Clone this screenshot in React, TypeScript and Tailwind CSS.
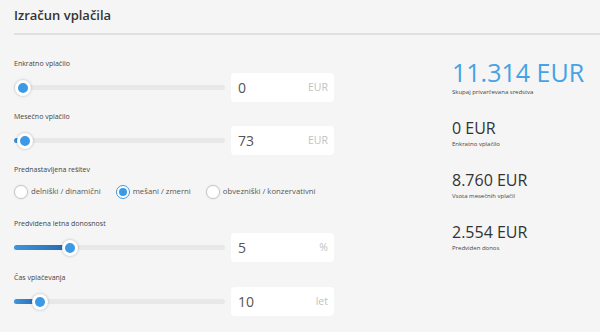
import { useState } from "react";

/* ---------------------------------- Types --------------------------------- */
type SliderRowProps = {
  label: string;
  value: number;
  unit: string;
  frac: number;
};

type Result = {
  value: string;
  label: string;
  accent?: boolean;
};

/* ---------------------------------- Data ---------------------------------- */
const TRACK_W = 211;
const THUMB = 16;

const presets = ["delniški / dinamični", "mešani / zmerni", "obvezniški / konzervativni"];

const results: Result[] = [
  { value: "11.314 EUR", label: "Skupaj privarčevana sredstva", accent: true },
  { value: "0 EUR", label: "Enkratno vplačilo" },
  { value: "8.760 EUR", label: "Vsota mesečnih vplačil" },
  { value: "2.554 EUR", label: "Predviden donos" },
];

/* ------------------------------- Components ------------------------------- */
function Slider({ frac }: { frac: number }) {
  const left = 1 + Math.round(frac * (TRACK_W - THUMB - 2));
  return (
    <div className="relative h-[16px] w-[211px]">
      <div className="absolute left-0 right-0 top-[5px] h-[5px] rounded-full bg-[#e8e8e8]" />
      {frac > 0 && (
        <div
          className="absolute left-0 top-[5px] h-[5px] rounded-full bg-gradient-to-r from-[#3f95de] to-[#2667ab]"
          style={{ width: left + THUMB / 2 }}
        />
      )}
      <div
        className="absolute top-0 h-[16px] w-[16px] rounded-full border-[3px] border-white bg-[#3b99e6] shadow-[0_0_3px_rgba(0,0,0,0.25)]"
        style={{ left }}
      />
    </div>
  );
}

function SliderRow({ label, value, unit, frac }: SliderRowProps) {
  return (
    <div className="flex flex-col">
      <div className="text-[7px] leading-[9px] text-[#444]">{label}</div>
      <div className="mt-[5px] flex items-center gap-[6px]">
        <Slider frac={frac} />
        <div className="flex h-[29px] w-[103px] items-center justify-between rounded-[4px] bg-white pl-[7px] pr-[6px]">
          <span className="text-[14px] text-[#555]">{value}</span>
          <span className="text-[10.5px] text-[#c2c2c2]">{unit}</span>
        </div>
      </div>
    </div>
  );
}

function Radio({ label, checked, onClick }: { label: string; checked: boolean; onClick: () => void }) {
  return (
    <button type="button" onClick={onClick} className="flex items-center gap-[3px]">
      <span
        className={
          checked
            ? "flex h-[14px] w-[14px] items-center justify-center rounded-full border border-[#3b99e6] bg-white"
            : "flex h-[14px] w-[14px] items-center justify-center rounded-full border border-[#c8c8c8] bg-white shadow-[0_0_2px_rgba(0,0,0,0.12)]"
        }
      >
        {checked && <span className="h-[8px] w-[8px] rounded-full bg-[#3b99e6]" />}
      </span>
      <span className="text-[7.75px] font-medium text-[#555]">{label}</span>
    </button>
  );
}

/* ------------------------------ Main Function ----------------------------- */
export default function App() {
  const [preset, setPreset] = useState(1);

  return (
    <div className="h-[332px] w-[600px] overflow-hidden bg-[#f5f5f5] font-['Open_Sans',sans-serif]">
      <div className="ml-[14px] border-b-2 border-[#e0e0e0] pb-[11px] pt-[9px]">
        <h1 className="text-[13px] font-semibold leading-[13px] text-[#333]">Izračun vplačila</h1>
      </div>

      <div className="flex px-[14px]">
        {/* ------------------------------ Inputs ------------------------------ */}
        <div className="flex w-[320px] flex-col pt-[24px]">
          <SliderRow label="Enkratno vplačilo" value={0} unit="EUR" frac={0} />
          <div className="mt-[10px]">
            <SliderRow label="Mesečno vplačilo" value={73} unit="EUR" frac={0.01} />
          </div>

          <div className="mt-[10px] text-[7px] leading-[9px] text-[#444]">Prednastavljena rešitev</div>
          <div className="mt-[11px] flex items-center gap-[15px]">
            {presets.map((p, i) => (
              <Radio key={p} label={p} checked={preset === i} onClick={() => setPreset(i)} />
            ))}
          </div>

          <div className="mt-[20px]">
            <SliderRow label="Predvidena letna donosnost" value={5} unit="%" frac={0.245} />
          </div>
          <div className="mt-[11px]">
            <SliderRow label="Čas vplačevanja" value={10} unit="let" frac={0.09} />
          </div>
        </div>

        {/* ------------------------------ Results ----------------------------- */}
        <div className="ml-[118px] flex flex-col pt-[25px]">
          {results.map((r, i) => (
            <div key={r.label} className={i === 0 ? "flex flex-col" : "mt-[24px] flex flex-col"}>
              <div
                className={
                  r.accent
                    ? "text-[25px] leading-[25px] text-[#45a2e6]"
                    : "text-[16px] leading-[16px] text-[#333]"
                }
              >
                {r.value}
              </div>
              <div className={i === 0 ? "mt-[3px] text-[6px] leading-[8px] text-[#444]" : "mt-[4px] text-[6px] leading-[8px] text-[#444]"}>
                {r.label}
              </div>
            </div>
          ))}
        </div>
      </div>
    </div>
  );
}
